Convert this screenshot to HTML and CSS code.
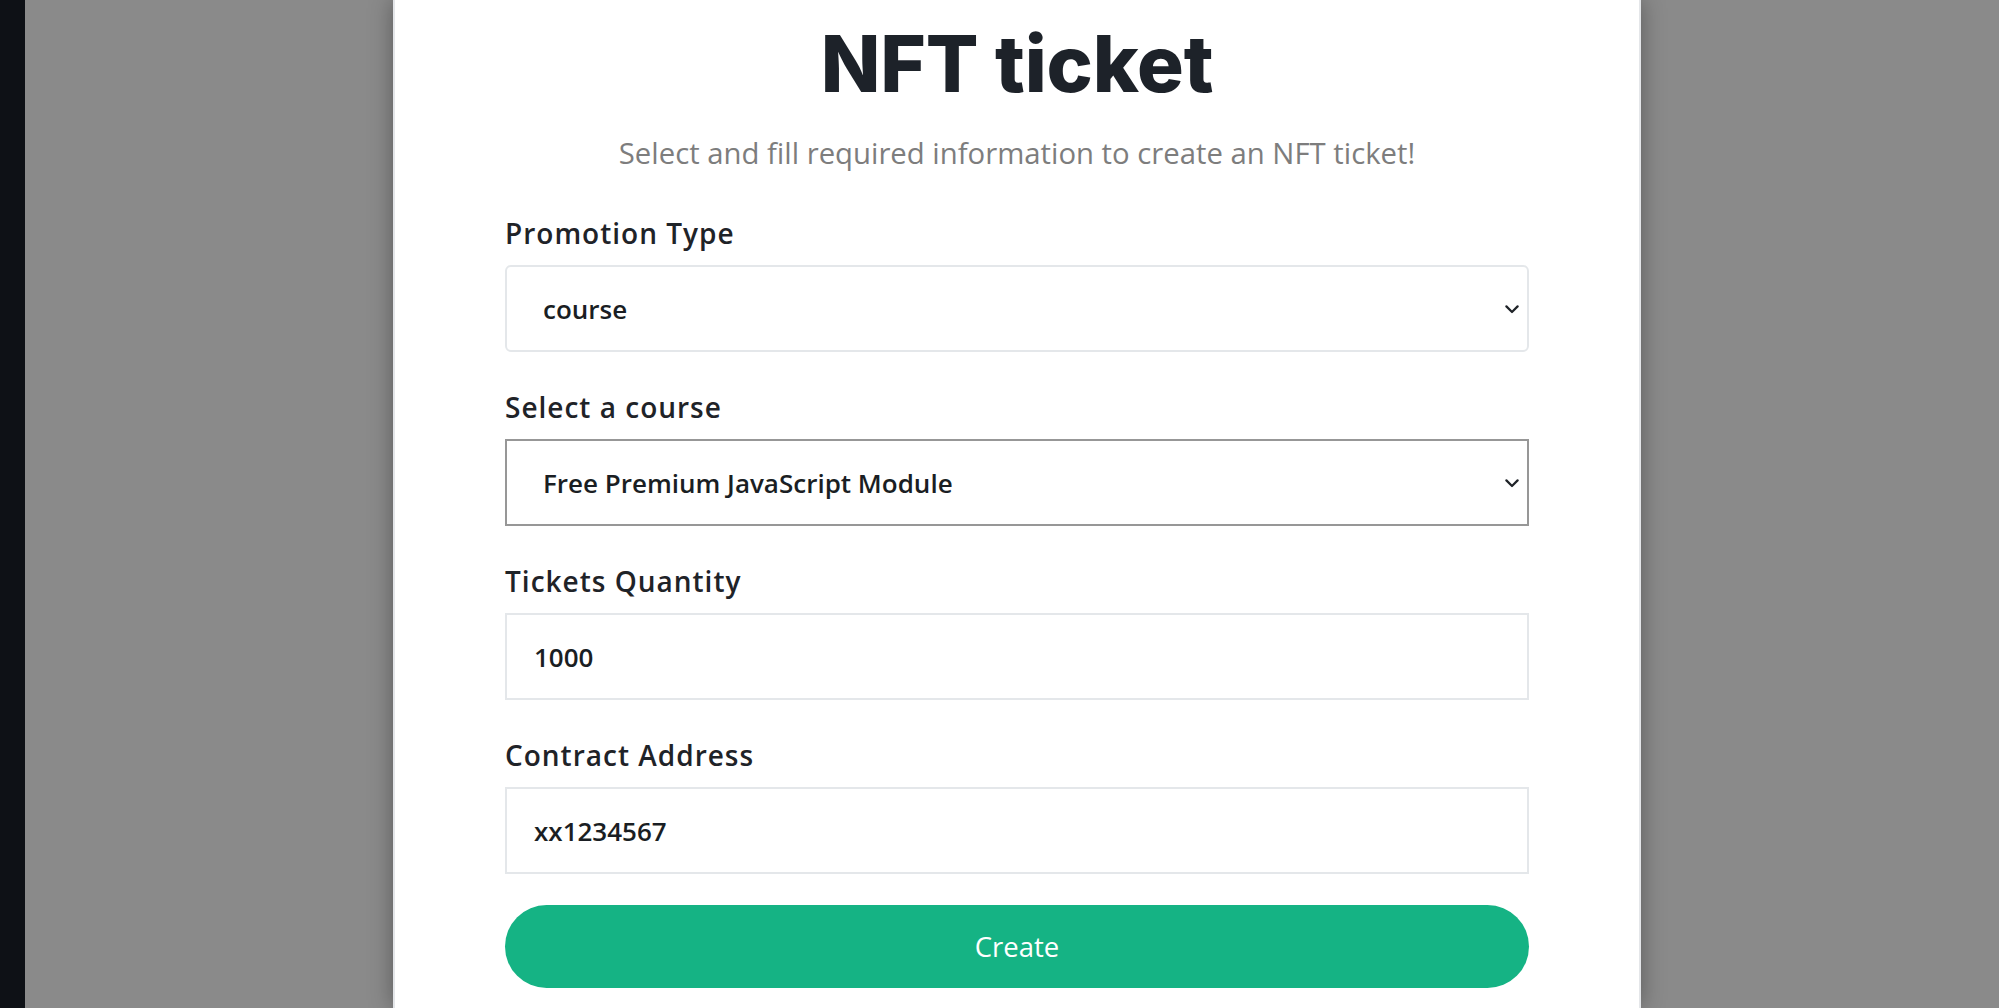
FILE: index.html
```html
<!DOCTYPE html>
<html lang="en">
<head>
<meta charset="utf-8">
<title>NFT ticket</title>
<link rel="stylesheet" href="styles.css">
</head>
<body>
<div class="app">
  <aside class="rail"></aside>
  <div class="overlay">
    <section class="modal">
      <h1 class="title">NFT ticket</h1>
      <p class="subtitle">Select and fill required information to create an NFT ticket!</p>
      <form class="form">
        <div class="field">
          <label class="label" for="ptype">Promotion Type</label>
          <div class="select-wrap">
            <select id="ptype" class="control select"><option>course</option></select>
            <svg class="chevron" viewBox="0 0 14 9" width="14" height="9"><polyline points="1.4,1.4 7,7 12.6,1.4"/></svg>
          </div>
        </div>
        <div class="field">
          <label class="label" for="course">Select a course</label>
          <div class="select-wrap">
            <select id="course" class="control select select-active"><option>Free Premium JavaScript Module</option></select>
            <svg class="chevron" viewBox="0 0 14 9" width="14" height="9"><polyline points="1.4,1.4 7,7 12.6,1.4"/></svg>
          </div>
        </div>
        <div class="field">
          <label class="label" for="qty">Tickets Quantity</label>
          <input id="qty" class="control input" type="text" value="1000">
        </div>
        <div class="field">
          <label class="label" for="addr">Contract Address</label>
          <input id="addr" class="control input" type="text" value="xx1234567">
        </div>
        <button type="button" class="create">Create</button>
      </form>
    </section>
  </div>
</div>
</body>
</html>
```

FILE: styles.css
```css
html, body {
  margin: 0;
  height: 100%;
  overflow: hidden;
}

.app {
  display: flex;
  height: 100vh;
}

.rail {
  flex: none;
  width: 25px;
  background: #0e1116;
}

.overlay {
  flex: 1;
  display: flex;
  justify-content: center;
  padding-left: 10px;
  background: #8a8a8a;
}

.modal {
  width: 1248px;
  box-sizing: border-box;
  background: #fff;
  border-left: 2px solid #e4e6e9;
  border-right: 2px solid #e4e6e9;
  padding: 0 110px;
  box-shadow: 0 0 22px rgba(0, 0, 0, 0.35);
}

.title {
  margin: 24px 0 0;
  font-family: Inter, "Liberation Sans", sans-serif;
  font-weight: 800;
  font-size: 78px;
  line-height: 80px;
  letter-spacing: -0.2px;
  color: #1d2229;
  text-align: center;
}

.subtitle {
  margin: 31px 0 0;
  font-family: "Open Sans", "Noto Sans", sans-serif;
  font-weight: 400;
  font-size: 29.3px;
  line-height: 36px;
  color: #7d7d7d;
  text-align: center;
}

.form {
  display: flex;
  flex-direction: column;
  margin-top: 44px;
}

.field + .field {
  margin-top: 37px;
}

.label {
  display: block;
  margin-bottom: 14px;
  font-family: "Open Sans", "Noto Sans", sans-serif;
  font-weight: 600;
  font-size: 28px;
  line-height: 36px;
  letter-spacing: 1px;
  color: #1f2328;
}

.select-wrap {
  position: relative;
}

.control {
  display: block;
  width: 100%;
  height: 87px;
  box-sizing: border-box;
  margin: 0;
  border: 2px solid #e4e7ea;
  background: #fff;
  font-family: "Open Sans", "Noto Sans", sans-serif;
  font-weight: 600;
  font-size: 26px;
  color: #1a1e23;
  outline: none;
  -webkit-appearance: none;
  appearance: none;
}

.select {
  padding: 0 60px 0 36px;
  border-radius: 6px;
}

.select-active {
  border-color: #979797;
  border-radius: 0;
}

.input {
  padding: 0 27px;
  border-radius: 0;
}

.chevron {
  position: absolute;
  right: 10px;
  top: calc(50% - 4px);
  fill: none;
  stroke: #1f2328;
  stroke-width: 2.2;
  stroke-linecap: round;
  stroke-linejoin: round;
  pointer-events: none;
}

.create {
  margin-top: 31px;
  height: 83px;
  width: 100%;
  border: none;
  border-radius: 42px;
  background: #15b384;
  color: #fff;
  font-family: "Open Sans", "Noto Sans", sans-serif;
  font-weight: 400;
  font-size: 27.5px;
  cursor: pointer;
}
```
